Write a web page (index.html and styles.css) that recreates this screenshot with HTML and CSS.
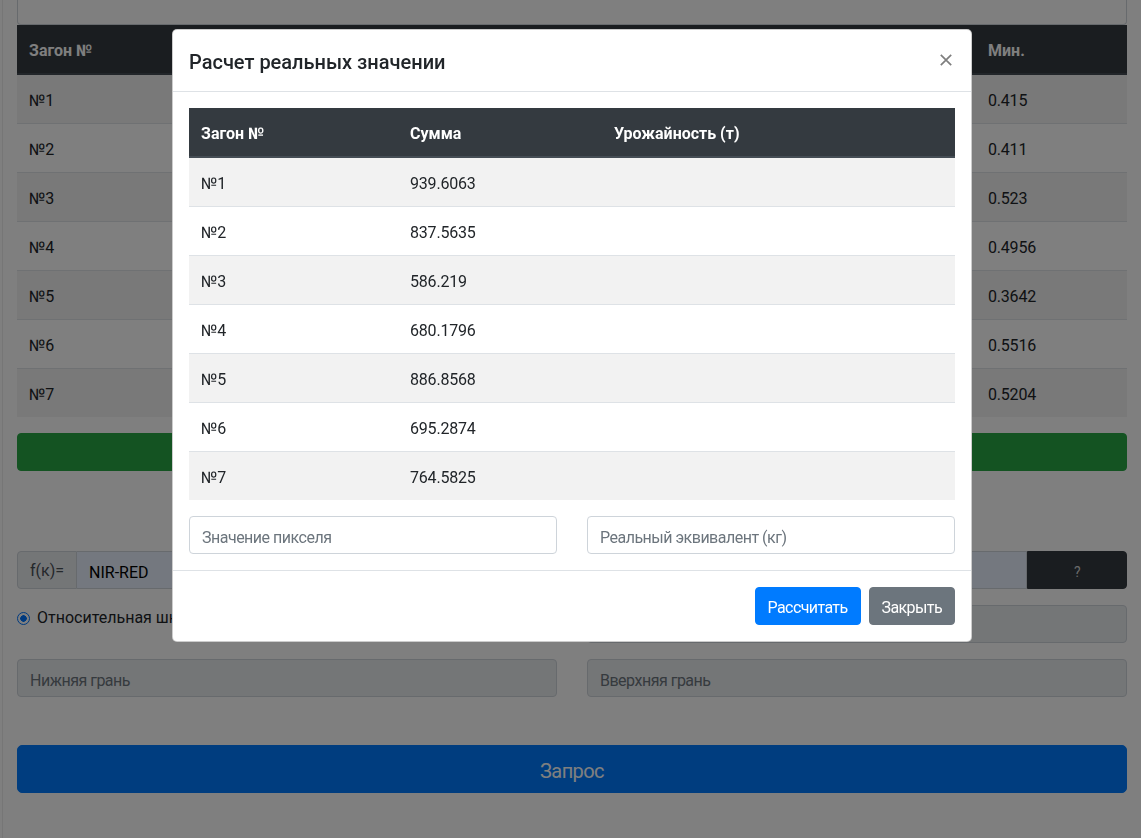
FILE: index.html
```html
<!DOCTYPE html>
<html lang="ru">
<head>
<meta charset="utf-8">
<title>Расчет</title>
<link rel="stylesheet" href="styles.css">
</head>
<body>
<div class="edge"></div>
<div class="page">
  <div class="top-box"></div>
  <table class="tbl bg-table">
    <colgroup><col class="c1"><col class="c2"><col class="c3"><col class="c4"></colgroup>
    <thead><tr><th>Загон №</th><th></th><th></th><th>Мин.</th></tr></thead>
    <tbody>
      <tr><td>№1</td><td></td><td></td><td>0.415</td></tr>
      <tr><td>№2</td><td></td><td></td><td>0.411</td></tr>
      <tr><td>№3</td><td></td><td></td><td>0.523</td></tr>
      <tr><td>№4</td><td></td><td></td><td>0.4956</td></tr>
      <tr><td>№5</td><td></td><td></td><td>0.3642</td></tr>
      <tr><td>№6</td><td></td><td></td><td>0.5516</td></tr>
      <tr><td>№7</td><td></td><td></td><td>0.5204</td></tr>
    </tbody>
  </table>
  <button class="btn btn-success btn-block"></button>

  <div class="input-group">
    <span class="ig-prepend">f(к)=</span>
    <input class="ig-input" type="text" value="NIR-RED">
    <button class="btn btn-dark ig-btn">?</button>
  </div>

  <div class="grid2">
    <div class="radios">
      <label class="radio"><span class="radio-dot"></span>Относительная шкала</label>
    </div>
    <input class="form-control" type="text" disabled>
  </div>

  <div class="grid2">
    <input class="form-control" type="text" placeholder="Нижняя грань" disabled>
    <input class="form-control" type="text" placeholder="Вверхняя грань" disabled>
  </div>

  <button class="btn btn-primary btn-lg btn-block query">Запрос</button>
</div>

<div class="backdrop"></div>

<div class="modal">
  <div class="modal-header">
    <h5 class="modal-title">Расчет реальных значении</h5>
    <button class="close" type="button" aria-label="Закрыть">
      <svg width="12" height="12" viewBox="0 0 12 12"><path d="M0.8 0.8 L11.2 11.2 M11.2 0.8 L0.8 11.2" stroke="#000" stroke-width="1.7" fill="none"/></svg>
    </button>
  </div>
  <div class="modal-body">
    <table class="tbl modal-table">
      <colgroup><col class="m1"><col class="m2"><col></colgroup>
      <thead><tr><th>Загон №</th><th>Сумма</th><th>Урожайность (т)</th></tr></thead>
      <tbody>
        <tr><td>№1</td><td>939.6063</td><td></td></tr>
        <tr><td>№2</td><td>837.5635</td><td></td></tr>
        <tr><td>№3</td><td>586.219</td><td></td></tr>
        <tr><td>№4</td><td>680.1796</td><td></td></tr>
        <tr><td>№5</td><td>886.8568</td><td></td></tr>
        <tr><td>№6</td><td>695.2874</td><td></td></tr>
        <tr><td>№7</td><td>764.5825</td><td></td></tr>
      </tbody>
    </table>
    <div class="grid2 modal-inputs">
      <input class="form-control" type="text" placeholder="Значение пикселя">
      <input class="form-control" type="text" placeholder="Реальный эквивалент (кг)">
    </div>
  </div>
  <div class="modal-footer">
    <button class="btn btn-primary">Рассчитать</button>
    <button class="btn btn-secondary">Закрыть</button>
  </div>
</div>
</body>
</html>
```

FILE: styles.css
```css
* { box-sizing: border-box; }
html, body { margin: 0; padding: 0; }
body {
  font-family: Roboto, "Open Sans", sans-serif;
  font-size: 16px;
  line-height: 1.5;
  color: #212529;
  background: #fff;
  overflow: hidden;
  height: 838px;
}
.edge {
  position: absolute;
  left: 2px; top: 0; bottom: 0;
  width: 1px;
  background: #ececec;
}
.page {
  width: 1110px;
  margin-left: 17px;
}
.top-box {
  height: 25px;
  border: 1px solid #ced4da;
  border-top: none;
  border-radius: 0 0 4px 4px;
}
.tbl {
  width: 100%;
  border-collapse: collapse;
  margin-bottom: 16px;
}
.tbl th, .tbl td {
  padding: 14px 12px 10px;
  text-align: left;
  vertical-align: top;
  border-top: 1px solid #dee2e6;
}
.tbl td { letter-spacing: -0.2px; }
.tbl th {
  background: #343a40;
  color: #fff;
  font-weight: 700;
  border-top: none;
  border-bottom: 2px solid #454d55;
}
.tbl thead + tbody tr:first-child td { border-top: none; }
.tbl tbody tr:nth-child(odd) td { background: #f2f2f2; }
.bg-table .c1 { width: 200px; }
.bg-table .c2 { width: 380px; }
.bg-table .c3 { width: 379px; }
.bg-table .c4 { width: 151px; }
.btn {
  display: inline-block;
  font-family: inherit;
  font-size: 16px;
  line-height: 24px;
  padding: 8px 12px 4px;
  border: 1px solid transparent;
  border-radius: 4px;
  color: #fff;
  letter-spacing: -0.6px;
  cursor: pointer;
}
.btn-block { display: block; width: 100%; }
.btn-success { background: #28a745; border-color: #28a745; height: 38px; margin-bottom: 80px; }
.btn-primary { background: #007bff; border-color: #007bff; }
.btn-secondary { background: #6c757d; border-color: #6c757d; }
.btn-dark { background: #343a40; border-color: #343a40; }
.btn-lg { font-size: 20px; line-height: 30px; padding: 10px 16px 6px; border-radius: 5px; height: 48px; }
.query { margin-top: 48px; }
.input-group {
  display: flex;
  height: 38px;
  margin-bottom: 16px;
}
.ig-prepend {
  width: 60px;
  display: flex;
  align-items: center;
  justify-content: center;
  padding-top: 2px;
  background: #e9ecef;
  border: 1px solid #ced4da;
  border-radius: 4px 0 0 4px;
  color: #495057;
}
.ig-input {
  flex: 1;
  min-width: 0;
  font-family: inherit;
  font-size: 16px;
  padding: 8px 12px 4px;
  border: 1px solid #ced4da;
  border-left: none;
  background: #e8f0fe;
  color: #000;
}
.ig-btn {
  width: 100px;
  border-radius: 0 4px 4px 0;
  color: #d4d4d4;
  font-size: 14px;
}
.grid2 {
  display: grid;
  grid-template-columns: 1fr 1fr;
  column-gap: 30px;
  margin-bottom: 16px;
}
.radios { display: flex; gap: 16px; align-items: flex-start; }
.radio {
  display: inline-flex;
  align-items: center;
  gap: 7px;
  line-height: 24px;
  white-space: nowrap;
  padding-top: 1px;
}
.radio-dot {
  width: 13px; height: 13px;
  border-radius: 50%;
  display: inline-block;
  border: 1.5px solid #0075ff;
  background: radial-gradient(circle, #0075ff 0 3px, #fff 3.5px);
}
.form-control {
  display: block;
  width: 100%;
  height: 38px;
  font-family: inherit;
  font-size: 16px;
  line-height: 24px;
  padding: 8px 12px 4px;
  border: 1px solid #ced4da;
  border-radius: 4px;
  background: #fff;
  color: #495057;
  letter-spacing: -0.5px;
}
.form-control:disabled { background: #e9ecef; }
.form-control::placeholder { color: #6c757d; }
.backdrop {
  position: fixed;
  inset: 0;
  background: rgba(0, 0, 0, 0.5);
}
.modal {
  position: absolute;
  left: 172px;
  top: 29px;
  width: 800px;
  background: #fff;
  border: 1px solid rgba(0, 0, 0, 0.2);
  border-radius: 5px;
}
.modal-header {
  display: flex;
  align-items: flex-start;
  justify-content: space-between;
  padding: 16px;
  height: 62px;
  border-bottom: 1px solid #dee2e6;
}
.modal-title {
  margin: 0;
  padding-top: 1px;
  font-size: 20px;
  font-weight: 500;
  line-height: 30px;
}
.close {
  display: flex;
  align-items: center;
  justify-content: center;
  width: 30px;
  height: 30px;
  padding: 0;
  margin: -1px -6px 0 auto;
  background: transparent;
  border: 0;
  opacity: 0.5;
}
.modal-body { padding: 16px; }
.modal-table .m1 { width: 209px; }
.modal-table .m2 { width: 204px; }
.modal-inputs { margin-bottom: 0; }
.modal-footer {
  display: flex;
  justify-content: flex-end;
  align-items: center;
  padding: 12px;
  border-top: 1px solid #dee2e6;
}
.modal-footer .btn { margin: 4px; }
```
